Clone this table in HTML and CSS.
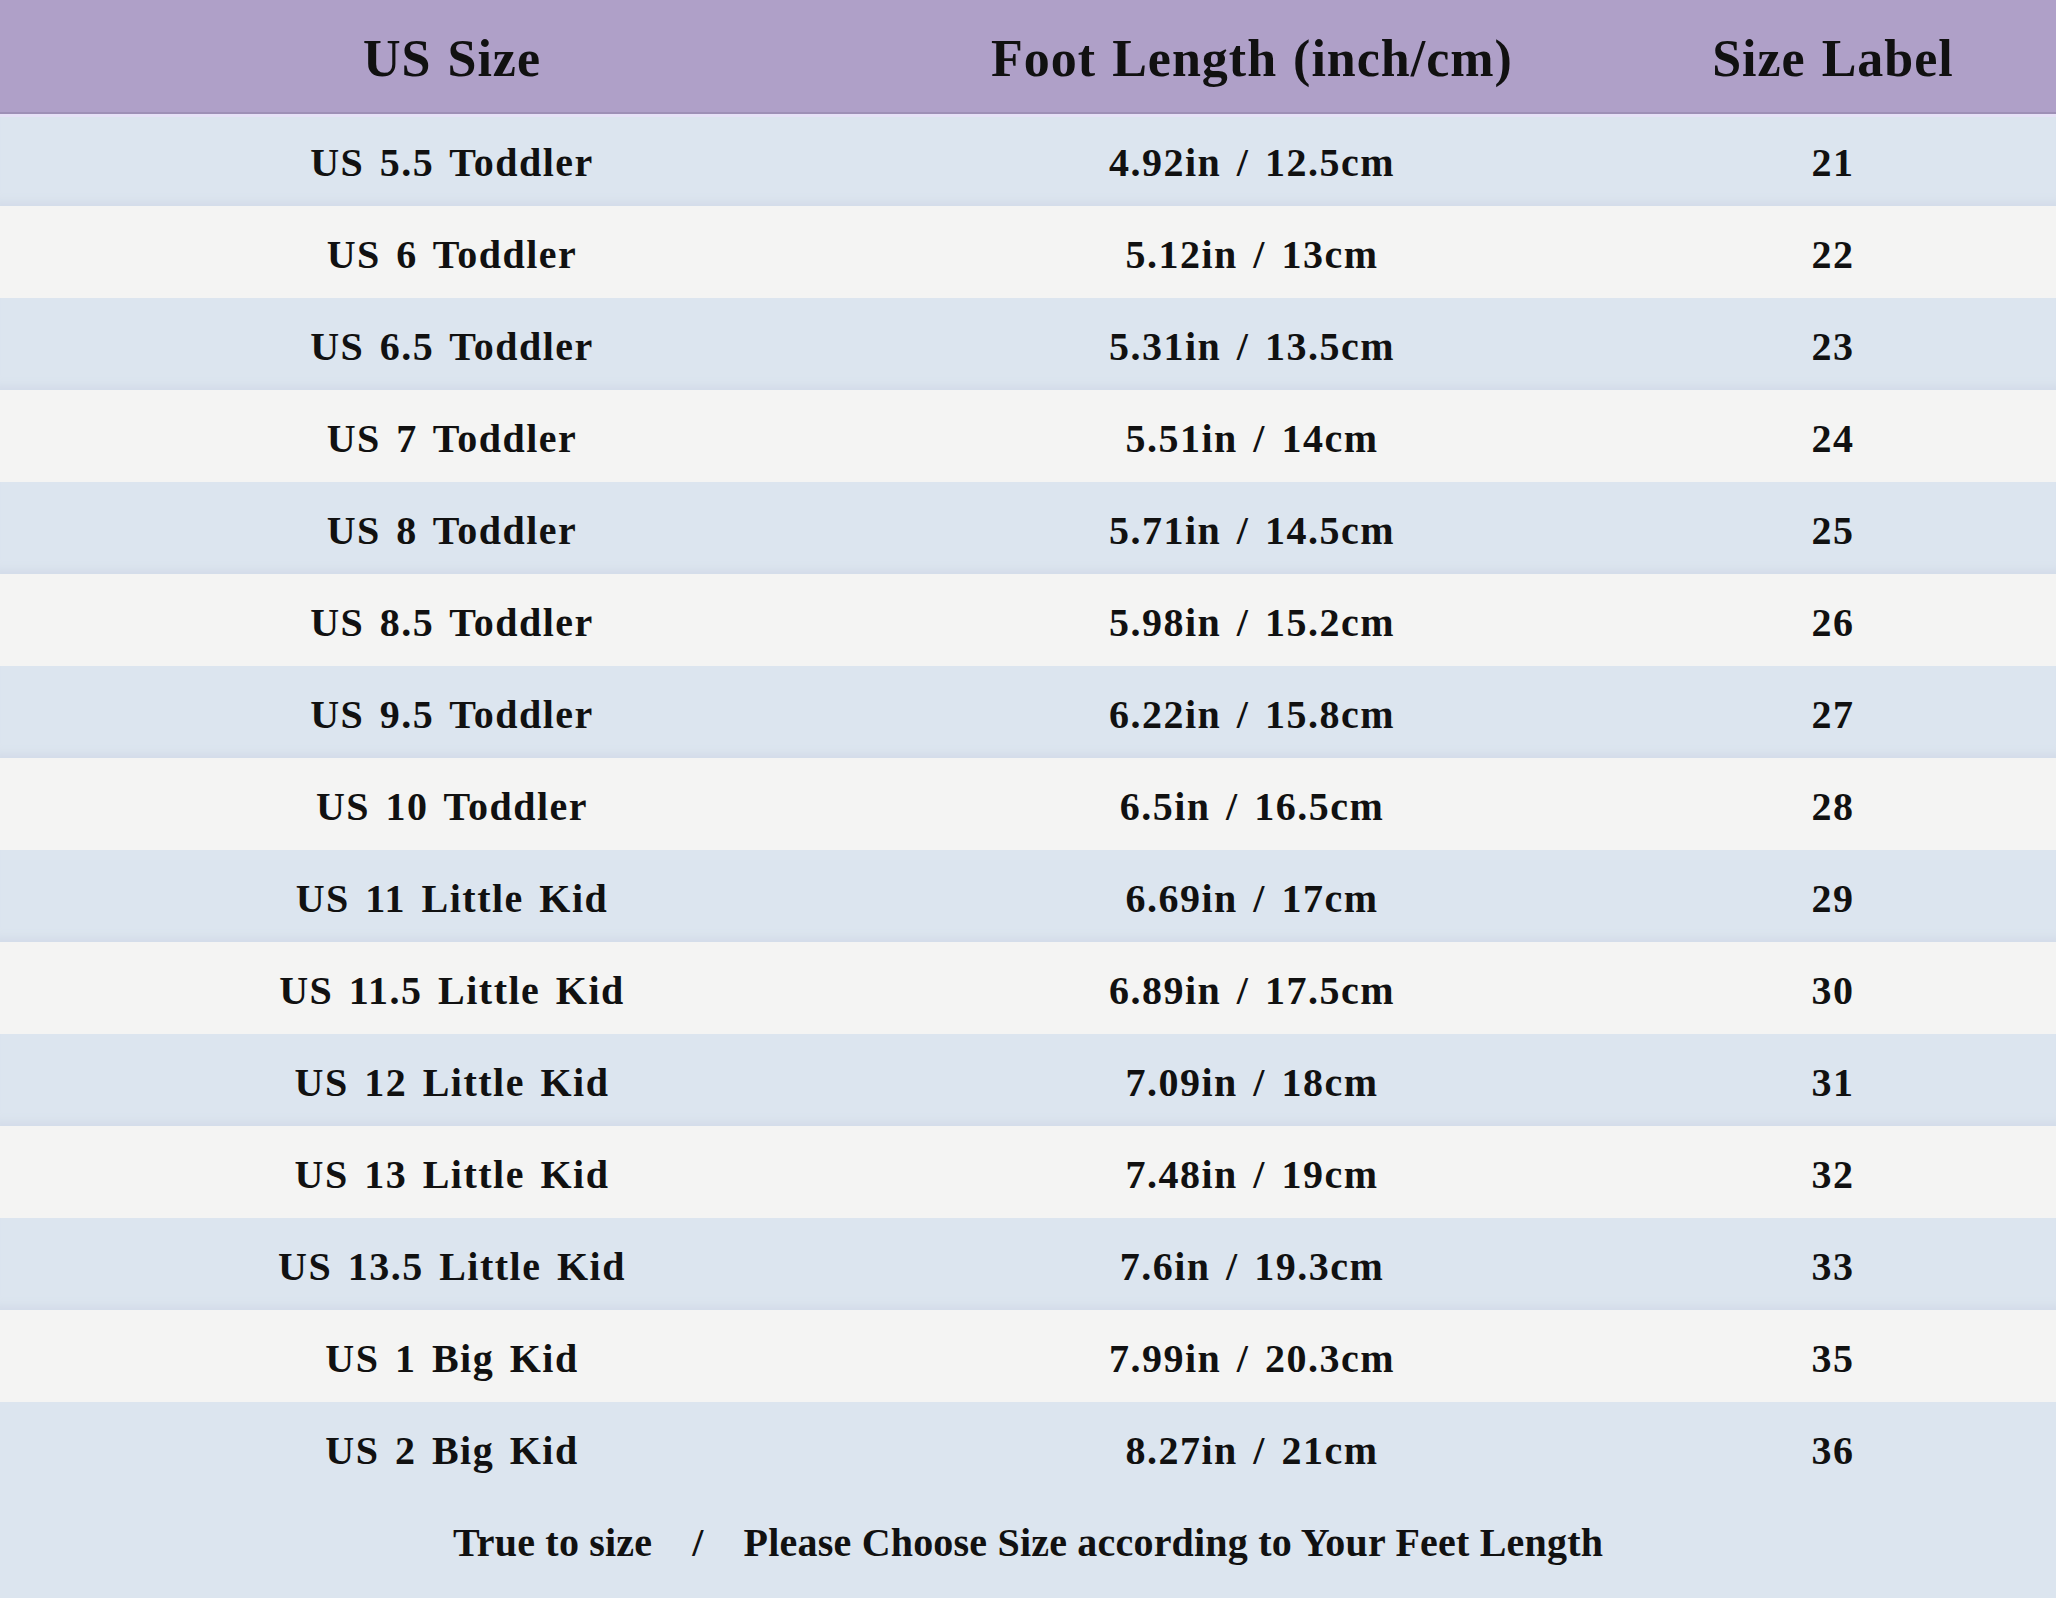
FILE: index.html
```html
<!DOCTYPE html>
<html lang="en">
<head>
<meta charset="utf-8">
<title>Size Chart</title>
<link rel="stylesheet" href="styles.css">
</head>
<body>
<div class="chart">
  <div class="row head">
    <div class="cell">US Size</div>
    <div class="cell">Foot Length (inch/cm)</div>
    <div class="cell">Size Label</div>
  </div>
  <div class="row blue"><div class="cell">US 5.5 Toddler</div><div class="cell">4.92in / 12.5cm</div><div class="cell">21</div></div>
  <div class="row white"><div class="cell">US 6 Toddler</div><div class="cell">5.12in / 13cm</div><div class="cell">22</div></div>
  <div class="row blue"><div class="cell">US 6.5 Toddler</div><div class="cell">5.31in / 13.5cm</div><div class="cell">23</div></div>
  <div class="row white"><div class="cell">US 7 Toddler</div><div class="cell">5.51in / 14cm</div><div class="cell">24</div></div>
  <div class="row blue"><div class="cell">US 8 Toddler</div><div class="cell">5.71in / 14.5cm</div><div class="cell">25</div></div>
  <div class="row white"><div class="cell">US 8.5 Toddler</div><div class="cell">5.98in / 15.2cm</div><div class="cell">26</div></div>
  <div class="row blue"><div class="cell">US 9.5 Toddler</div><div class="cell">6.22in / 15.8cm</div><div class="cell">27</div></div>
  <div class="row white"><div class="cell">US 10 Toddler</div><div class="cell">6.5in / 16.5cm</div><div class="cell">28</div></div>
  <div class="row blue"><div class="cell">US 11 Little Kid</div><div class="cell">6.69in / 17cm</div><div class="cell">29</div></div>
  <div class="row white"><div class="cell">US 11.5 Little Kid</div><div class="cell">6.89in / 17.5cm</div><div class="cell">30</div></div>
  <div class="row blue"><div class="cell">US 12 Little Kid</div><div class="cell">7.09in / 18cm</div><div class="cell">31</div></div>
  <div class="row white"><div class="cell">US 13 Little Kid</div><div class="cell">7.48in / 19cm</div><div class="cell">32</div></div>
  <div class="row blue"><div class="cell">US 13.5 Little Kid</div><div class="cell">7.6in / 19.3cm</div><div class="cell">33</div></div>
  <div class="row white"><div class="cell">US 1 Big Kid</div><div class="cell">7.99in / 20.3cm</div><div class="cell">35</div></div>
  <div class="row blue last"><div class="cell">US 2 Big Kid</div><div class="cell">8.27in / 21cm</div><div class="cell">36</div></div>
  <div class="footer">
    <span>True to size</span><span class="sep">/</span><span>Please Choose Size according to Your Feet Length</span>
  </div>
</div>
</body>
</html>
```

FILE: styles.css
```css
* { box-sizing: border-box; }
html, body { margin: 0; padding: 0; }
body {
  width: 2056px;
  height: 1598px;
  background: #dce5ef;
  font-family: "Liberation Serif", "DejaVu Serif", serif;
  color: #111;
  overflow: hidden;
}
.chart {
  display: flex;
  flex-direction: column;
  width: 2056px;
}
.row {
  display: grid;
  grid-template-columns: 904px 696px 456px;
  height: 92px;
  align-items: center;
}
.cell {
  text-align: center;
  white-space: nowrap;
  font-weight: bold;
  font-size: 40px;
  letter-spacing: 1.5px;
  word-spacing: 4px;
  padding-top: 5px;
}
.cell:last-child { padding-left: 10px; }
.head {
  height: 114px;
  background: #afa0c8;
  border-bottom: 2px solid #9e90b6;
  box-shadow: 0 3px 0 #e6e1f6;
  position: relative;
  z-index: 1;
}
.head .cell {
  font-size: 52px;
  letter-spacing: 1px;
  word-spacing: 2px;
  padding-top: 4px;
}
.blue {
  background: #dce5ef;
  box-shadow: inset 0 -12px 10px -8px #d2dbe8;
}
.white {
  background: #f4f4f3;
}
.last { box-shadow: none; }
.footer {
  height: 104px;
  display: flex;
  justify-content: center;
  align-items: center;
  font-weight: bold;
  font-size: 40px;
  letter-spacing: 0.2px;
  padding-bottom: 8px;
  white-space: nowrap;
}
.sep { margin: 0 40px; }
```
